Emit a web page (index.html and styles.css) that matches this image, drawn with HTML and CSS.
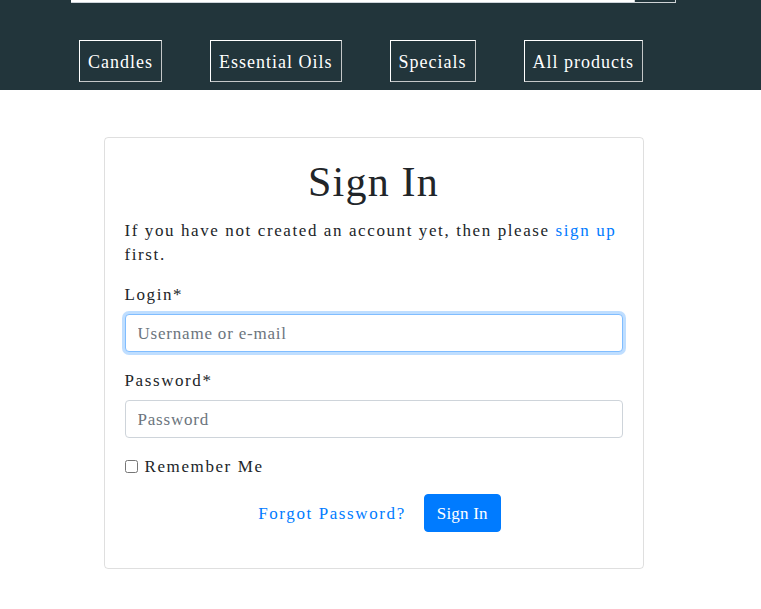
FILE: index.html
```html
<!DOCTYPE html>
<html lang="en">
<head>
<meta charset="utf-8">
<title>Sign In</title>
<link rel="stylesheet" href="styles.css">
</head>
<body>
<header class="site-header">
  <div class="container">
    <form class="search">
      <input class="search-input" type="text" aria-label="Search">
      <button class="search-btn" type="button" aria-label="Search"></button>
    </form>
    <nav class="main-nav">
      <a class="nav-item" href="#">Candles</a>
      <a class="nav-item" href="#">Essential Oils</a>
      <a class="nav-item" href="#">Specials</a>
      <a class="nav-item" href="#">All products</a>
    </nav>
  </div>
</header>
<main class="container">
  <div class="card">
    <h1 class="title">Sign In</h1>
    <p class="intro">If you have not created an account yet, then please <a class="link" href="#">sign up</a> first.</p>
    <form class="signin">
      <div class="field">
        <label class="label" for="login">Login*</label>
        <input class="control is-focused" id="login" type="text" placeholder="Username or e-mail">
      </div>
      <div class="field">
        <label class="label" for="password">Password*</label>
        <input class="control" id="password" type="password" placeholder="Password">
      </div>
      <div class="field check">
        <input class="checkbox" id="remember" type="checkbox">
        <label class="check-label" for="remember">Remember Me</label>
      </div>
      <div class="actions">
        <a class="link forgot" href="#">Forgot Password?</a>
        <button class="btn-primary" type="button">Sign In</button>
      </div>
    </form>
  </div>
</main>
</body>
</html>
```
FILE: styles.css
```css
* { box-sizing: border-box; }

html, body {
  margin: 0;
  padding: 0;
  background: #fff;
}

body {
  font-family: "Liberation Serif", "Times New Roman", serif;
  font-size: 17px;
  line-height: 24px;
  letter-spacing: 1.6px;
  color: #212529;
  overflow: hidden;
}

.site-header {
  height: 90px;
  background: #22353b;
  overflow: hidden;
}

.site-header .container {
  width: 605px;
  margin-left: 71px;
}

.search {
  display: flex;
  height: 38px;
  margin: -35px 0 0 0;
}

.search-input {
  flex: 1;
  height: 38px;
  border: 0;
  border-bottom: 1px solid #ced4da;
  background: #fff;
  margin: 0;
  padding: 0;
}

.search-btn {
  width: 42px;
  height: 38px;
  margin: 0;
  padding: 0;
  background: #22353b;
  border: 1px solid #cfd4d6;
}

.main-nav {
  display: flex;
  gap: 48px;
  padding-left: 8px;
  margin-top: 37px;
}

.nav-item {
  display: block;
  padding: 9px 8px 7px 8px;
  font-size: 18px;
  line-height: 24px;
  letter-spacing: 1px;
  color: #fff;
  text-decoration: none;
  border: 1px solid;
  border-color: #fff #c4c7c8 #c4c7c8 #fff;
}

main.container {
  width: 747px;
  padding-top: 47px;
}

.card {
  width: 540px;
  margin: 0 auto;
  padding: 20px;
  border: 1px solid rgba(0, 0, 0, 0.125);
  border-radius: 4px;
}

.title {
  margin: 0 0 12px 0;
  font-size: 42px;
  font-weight: 400;
  line-height: 48px;
  letter-spacing: 1.2px;
  text-align: center;
}

.intro {
  margin: 0 0 15px 0;
  padding-top: 1px;
}

.link {
  color: #007bff;
  text-decoration: none;
}

.field {
  margin-bottom: 16px;
}

.label {
  display: block;
  padding-top: 1px;
  margin-bottom: 7px;
}

.control {
  display: block;
  width: 100%;
  height: 38px;
  padding: 7px 12px 5px 12px;
  font-family: inherit;
  font-size: 17px;
  letter-spacing: 0.8px;
  color: #495057;
  background: #fff;
  border: 1px solid #ced4da;
  border-radius: 4px;
  outline: none;
}

.control::placeholder {
  color: #6c757d;
}

.control.is-focused {
  border-color: #80bdff;
  box-shadow: 0 0 0 3px rgba(0, 123, 255, 0.25);
}

.check {
  display: flex;
  align-items: center;
}

.checkbox {
  width: 13px;
  height: 13px;
  margin: 0 7px 0 0;
}

.check-label {
  padding-top: 2px;
  line-height: 22px;
}

.actions {
  display: flex;
  justify-content: center;
  align-items: center;
  gap: 6px;
  margin-bottom: 16px;
}

.forgot {
  padding: 2px 12px 0 12px;
}

.btn-primary {
  height: 38px;
  padding: 7px 12px 5px 12px;
  font-family: inherit;
  font-size: 17px;
  line-height: 24px;
  letter-spacing: 0.2px;
  color: #fff;
  background: #007bff;
  border: 1px solid #007bff;
  border-radius: 4px;
}
```
